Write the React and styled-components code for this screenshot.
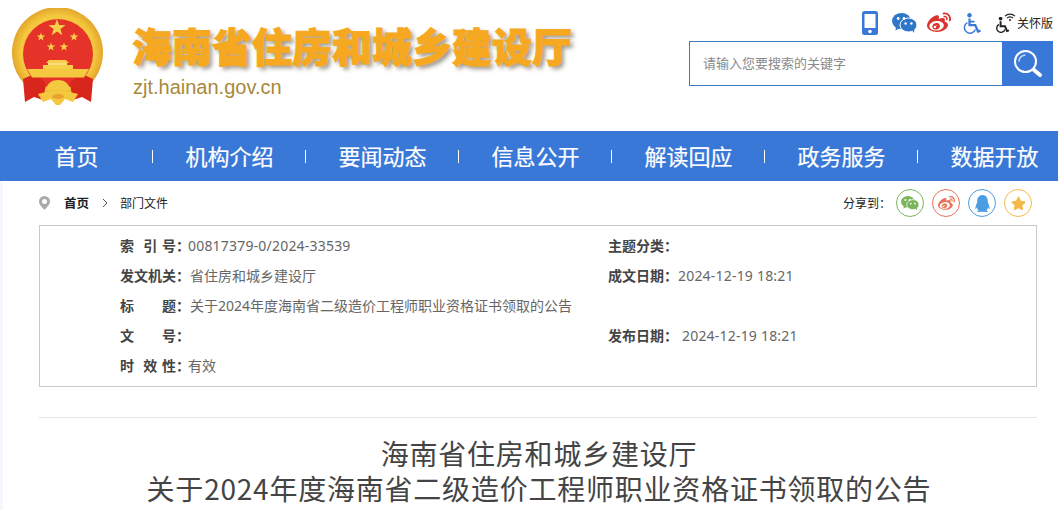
import React from 'react'
import styled, { createGlobalStyle } from 'styled-components'
import { FaWeibo, FaQq, FaStar } from 'react-icons/fa'

const cjk = '"Noto Sans CJK SC", "Noto Sans", sans-serif'

const GlobalStyle = createGlobalStyle`
    html, body {
        margin: 0;
        height: 510px;
        overflow: hidden;
        background: #fff;
        font-family: ${cjk};
    }
`

const Page = styled.div`
    width: 1058px;
    height: 510px;
    overflow: hidden;
`

const Header = styled.header`
    height: 131px;
    display: flex;
    justify-content: space-between;
    padding: 8px 5px 0 12px;
    box-sizing: border-box;
`

const Brand = styled.div`
    display: flex;
    gap: 29px;
    align-items: flex-start;
`

const BrandText = styled.div`
    display: flex;
    flex-direction: column;
    padding-top: 8px;
`

const SiteName = styled.div`
    font-size: 40px;
    line-height: 59px;
    font-weight: 900;
    margin-left: -1px;
    color: #f6a821;
    -webkit-text-stroke: 1px #f6a821;
    text-shadow: 3px 3px 4px rgba(90, 80, 60, 0.6);
`

const Domain = styled.div`
    font-family: "Liberation Sans", Arial, sans-serif;
    font-size: 20px;
    line-height: 24px;
    color: #a8883a;
`

const Tools = styled.div`
    display: flex;
    flex-direction: column;
    align-items: flex-end;
    width: 364px;
`

const IconRow = styled.div`
    display: flex;
    align-items: center;
    height: 28px;
    padding-top: 1px;
    margin-bottom: 4px;
`

const ToolIcon = styled.span`
    display: flex;
    width: ${p => p.$w}px;
    margin-right: ${p => p.$gap}px;
    color: ${p => p.$color};
    font-size: ${p => p.$size}px;
`

const CareLink = styled.span`
    display: flex;
    align-items: center;
    gap: 1px;
    color: #222;
    font-size: 12px;
    line-height: 24px;
`

const SearchBox = styled.div`
    display: flex;
    width: 364px;
    height: 45px;
    border: 1px solid #3f7cc0;
    box-sizing: border-box;
`

const SearchInput = styled.div`
    flex: 1;
    font-size: 13px;
    line-height: 41px;
    padding-left: 13px;
    color: #8a8a8a;
`

const SearchButton = styled.div`
    width: 51px;
    margin: -1px;
    background: #3a78d8;
    display: flex;
    align-items: center;
    justify-content: center;
`

const Nav = styled.nav`
    height: 50px;
    background: #3a78d8;
    display: grid;
    grid-template-columns: repeat(7, 153px);
`

const NavItem = styled.a`
    position: relative;
    color: #fff;
    font-size: 22px;
    line-height: 48px;
    text-align: center;
    -webkit-text-stroke: 0.2px #fff;
    &:not(:last-child)::after {
        content: '';
        position: absolute;
        right: 0;
        top: 19px;
        width: 1px;
        height: 13px;
        background: #fff;
    }
`

const Content = styled.main`
    padding: 0 21px 0 36px;
    border-left: 3px solid #f4f7fc;
    height: 329px;
`

const CrumbBar = styled.div`
    height: 44px;
    display: flex;
    align-items: center;
    justify-content: space-between;
    padding-right: 5px;
`

const Crumbs = styled.div`
    display: flex;
    align-items: center;
    font-size: 12px;
    color: #222;
`

const CrumbText = styled.span`
    padding-bottom: 2px;
`

const CrumbHome = styled(CrumbText)`
    font-weight: 700;
    margin-left: 14px;
    font-size: 12.5px;
`

const CrumbArrow = styled.svg`
    margin: 0 12px 0 13px;
`

const Share = styled.div`
    display: flex;
    align-items: center;
    gap: 8px;
    font-size: 12px;
    color: #222;
`

const ShareLabel = styled(CrumbText)`
    margin-right: -3px;
`

const ShareIcon = styled.span`
    width: 28px;
    height: 28px;
    box-sizing: border-box;
    border: 1px solid ${p => p.$color};
    border-radius: 50%;
    color: ${p => p.$color};
    font-size: ${p => p.$size || 17}px;
    display: flex;
    align-items: center;
    justify-content: center;
`

const InfoBox = styled.section`
    height: 162px;
    box-sizing: border-box;
    border: 1px solid #c9c9c9;
    padding: 4px 0 0 80px;
    display: grid;
    grid-template-columns: 488px 1fr;
    grid-auto-rows: 30px;
    font-family: "Noto Sans", "Noto Sans CJK SC", sans-serif;
    font-size: 14px;
    color: #666;
`

const InfoCell = styled.div`
    display: flex;
    align-items: center;
    white-space: nowrap;
`

const InfoLabel = styled.span`
    font-weight: 700;
    color: #444;
    white-space: pre;
    word-spacing: 1px;
    width: ${p => p.$w || 68}px;
`

const NumberValue = styled.span`
    letter-spacing: 0.2px;
`

const Divider = styled.hr`
    border: 0;
    border-top: 1px solid #e4e4e4;
    margin: 30px 0 0;
`

const Title = styled.h1`
    margin: 18px 0 0;
    padding-left: 2px;
    font-size: 28px;
    line-height: 35px;
    font-weight: 400;
    letter-spacing: 0.78px;
    text-align: center;
    color: #444;
`

const starPoints = (cx, cy, r) => {
    const pts = []
    for (let i = 0; i < 10; i++) {
        const rad = i % 2 ? r * 0.4 : r
        const a = -Math.PI / 2 + (i * Math.PI) / 5
        pts.push(`${(cx + rad * Math.cos(a)).toFixed(1)},${(cy + rad * Math.sin(a)).toFixed(1)}`)
    }
    return pts.join(' ')
}

const Emblem = () => (
    <svg width="92" height="98" viewBox="12 8 92 98">
        <defs>
            <radialGradient id="gold" cx="50%" cy="50%" r="50%">
                <stop offset="80%" stopColor="#f5c93f" />
                <stop offset="100%" stopColor="#e3a62b" />
            </radialGradient>
        </defs>
        <circle cx="57.5" cy="52.5" r="45.5" fill="url(#gold)" />
        <circle cx="58" cy="54" r="35" fill="#e6332a" />
        <path d="M23 79 L36 73 L46 84 L43 100 L34 97 L25 102 Z M93 79 L80 73 L70 84 L73 100 L82 97 L91 102 Z" fill="#d8261c" />
        <path d="M27 69 H89 L84 77.5 H32 Z" fill="#f5c93f" />
        <polygon points={starPoints(57, 28, 9)} fill="#f7d04a" />
        <polygon points={starPoints(41, 37, 4.5)} fill="#f7d04a" />
        <polygon points={starPoints(74, 37, 4.5)} fill="#f7d04a" />
        <polygon points={starPoints(51, 47, 4.5)} fill="#f7d04a" />
        <polygon points={starPoints(64, 47, 4.5)} fill="#f7d04a" />
        <path d="M46 63 L49 60 H66 L69 63 Z" fill="#f7d04a" />
        <rect x="48" y="63" width="19" height="2" fill="#f9dd7c" />
        <path d="M43 69 V65 H73 V69 Z" fill="#f7d04a" />
        <path d="M46 90 C47 83 52 80 58 80 C64 80 69 83 70 90 Z" fill="#f5c93f" />
        <path d="M38 94 L50 91 H66 L78 94 L73 102 L65 99 L60 105 H56 L51 99 L43 102 Z" fill="#f5c93f" />
        <ellipse cx="58" cy="96.5" rx="6" ry="2.4" fill="#e8a22e" />
    </svg>
)

const PhoneIcon = () => (
    <svg width="16" height="24" viewBox="0 0 16 24">
        <rect width="16" height="24" rx="2.5" fill="#3a78d8" />
        <rect x="2.5" y="3" width="11" height="14" fill="#fff" />
        <circle cx="8" cy="20.5" r="1.8" fill="#fff" />
    </svg>
)

const WechatIcon = ({ size = 25, color }) => (
    <svg width={size} height={size * 0.8} viewBox="0 0 25 20">
        <ellipse cx="9.5" cy="8" rx="9.5" ry="8" fill={color} />
        <path d="M4 13 L3.5 17.5 L9 14.5 Z" fill={color} />
        <ellipse cx="16.5" cy="12" rx="8.5" ry="7" fill={color} stroke="#fff" strokeWidth="1" />
        <path d="M20 17 L22 20 L22.5 15 Z" fill={color} />
        <circle cx="6.2" cy="5.5" r="1.4" fill="#fff" />
        <circle cx="12" cy="5.5" r="1.4" fill="#fff" />
        <circle cx="13.6" cy="10.5" r="1.2" fill="#fff" />
        <circle cx="19.4" cy="10.5" r="1.2" fill="#fff" />
    </svg>
)

const WheelchairIcon = ({ width, height, color }) => (
    <svg width={width} height={height} viewBox="0 0 18 21" fill="none" stroke={color}>
        <circle cx="6.5" cy="2.2" r="2.2" fill={color} stroke="none" />
        <path d="M6.5 5.5 V12.2 H12.3 L15 18.5 L17.5 17.6" strokeWidth="2.2" />
        <path d="M6.5 8.6 H11.5" strokeWidth="1.8" />
        <path d="M4.4 9.6 A5.6 5.6 0 1 0 12.3 16.4" strokeWidth="1.5" />
    </svg>
)

const CareIcon = () => (
    <svg width="21" height="20" viewBox="0 0 21 20">
        <svg x="0" y="4" width="15" height="16" viewBox="0 0 18 21" fill="none" stroke="#222">
            <circle cx="6.5" cy="2.2" r="2.4" fill="#222" stroke="none" />
            <path d="M6.5 5.5 V12.2 H12.3 L15 18.5 L17.5 17.6" strokeWidth="2.6" />
            <path d="M4.4 9.6 A5.6 5.6 0 1 0 12.3 16.4" strokeWidth="1.8" />
        </svg>
        <g fill="none" stroke="#222" strokeWidth="1.1">
            <path d="M10 3.2 A7 7 0 0 1 20 3.2" />
            <path d="M12 5.2 A4 4 0 0 1 18 5.2" />
        </g>
        <circle cx="15" cy="7" r="1" fill="#222" />
    </svg>
)

const SearchIcon = () => (
    <svg width="30" height="30" viewBox="0 0 30 30" fill="none" stroke="#fff">
        <circle cx="12.5" cy="12.5" r="10.5" strokeWidth="2" />
        <path d="M6 12.5 A6.5 6.5 0 0 1 12.5 6" strokeWidth="1.5" opacity="0.7" />
        <path d="M21 21 L27 26" strokeWidth="4" strokeLinecap="round" />
    </svg>
)

const PinIcon = () => (
    <svg width="11" height="14" viewBox="0 0 11 14">
        <path fillRule="evenodd" d="M5.5 0 A5.5 5.5 0 0 1 11 5.5 C11 9 7 12 5.5 14 C4 12 0 9 0 5.5 A5.5 5.5 0 0 1 5.5 0 Z M5.5 3 A2.5 2.5 0 1 0 5.5 8 A2.5 2.5 0 1 0 5.5 3 Z" fill="#a9a9a9" />
    </svg>
)

const navItems = ['首页', '机构介绍', '要闻动态', '信息公开', '解读回应', '政务服务', '数据开放']

const App = () => (
    <Page>
        <GlobalStyle />
        <Header>
            <Brand>
                <Emblem />
                <BrandText>
                    <SiteName>海南省住房和城乡建设厅</SiteName>
                    <Domain>zjt.hainan.gov.cn</Domain>
                </BrandText>
            </Brand>
            <Tools>
                <IconRow>
                    <ToolIcon $w={16} $gap={14}><PhoneIcon /></ToolIcon>
                    <ToolIcon $w={25} $gap={10}><WechatIcon color="#2f78c8" /></ToolIcon>
                    <ToolIcon $w={24} $gap={12} $size={24} $color="#d9342b"><FaWeibo /></ToolIcon>
                    <ToolIcon $w={18} $gap={14}><WheelchairIcon width={18} height={21} color="#3a78d8" /></ToolIcon>
                    <CareLink>
                        <CareIcon />
                        关怀版
                    </CareLink>
                </IconRow>
                <SearchBox>
                    <SearchInput>请输入您要搜索的关键字</SearchInput>
                    <SearchButton><SearchIcon /></SearchButton>
                </SearchBox>
            </Tools>
        </Header>
        <Nav>
            {navItems.map(item => <NavItem key={item}>{item}</NavItem>)}
        </Nav>
        <Content>
            <CrumbBar>
                <Crumbs>
                    <PinIcon />
                    <CrumbHome>首页</CrumbHome>
                    <CrumbArrow width="6" height="10" viewBox="0 0 6 10" fill="none" stroke="#555">
                        <path d="M1 1 L5 5 L1 9" />
                    </CrumbArrow>
                    <CrumbText>部门文件</CrumbText>
                </Crumbs>
                <Share>
                    <ShareLabel>分享到：</ShareLabel>
                    <ShareIcon $color="#7ab55c"><WechatIcon size={18} color="#7ab55c" /></ShareIcon>
                    <ShareIcon $color="#e8735a"><FaWeibo /></ShareIcon>
                    <ShareIcon $color="#4a9de0"><FaQq /></ShareIcon>
                    <ShareIcon $color="#f5b94b" $size={15}><FaStar /></ShareIcon>
                </Share>
            </CrumbBar>
            <InfoBox>
                <InfoCell><InfoLabel>{'索  引 号：'}</InfoLabel><NumberValue>00817379-0/2024-33539</NumberValue></InfoCell>
                <InfoCell><InfoLabel>主题分类：</InfoLabel></InfoCell>
                <InfoCell><InfoLabel $w={70}>发文机关：</InfoLabel>省住房和城乡建设厅</InfoCell>
                <InfoCell><InfoLabel $w={70}>成文日期：</InfoLabel><NumberValue>2024-12-19 18:21</NumberValue></InfoCell>
                <InfoCell><InfoLabel $w={70}>标　　题：</InfoLabel>关于2024年度海南省二级造价工程师职业资格证书领取的公告</InfoCell>
                <InfoCell />
                <InfoCell><InfoLabel>文　　号：</InfoLabel></InfoCell>
                <InfoCell><InfoLabel $w={74}>发布日期：</InfoLabel><NumberValue>2024-12-19 18:21</NumberValue></InfoCell>
                <InfoCell><InfoLabel>{'时  效 性：'}</InfoLabel>有效</InfoCell>
            </InfoBox>
            <Divider />
            <Title>
                海南省住房和城乡建设厅<br />
                关于2024年度海南省二级造价工程师职业资格证书领取的公告
            </Title>
        </Content>
    </Page>
)

export default App
